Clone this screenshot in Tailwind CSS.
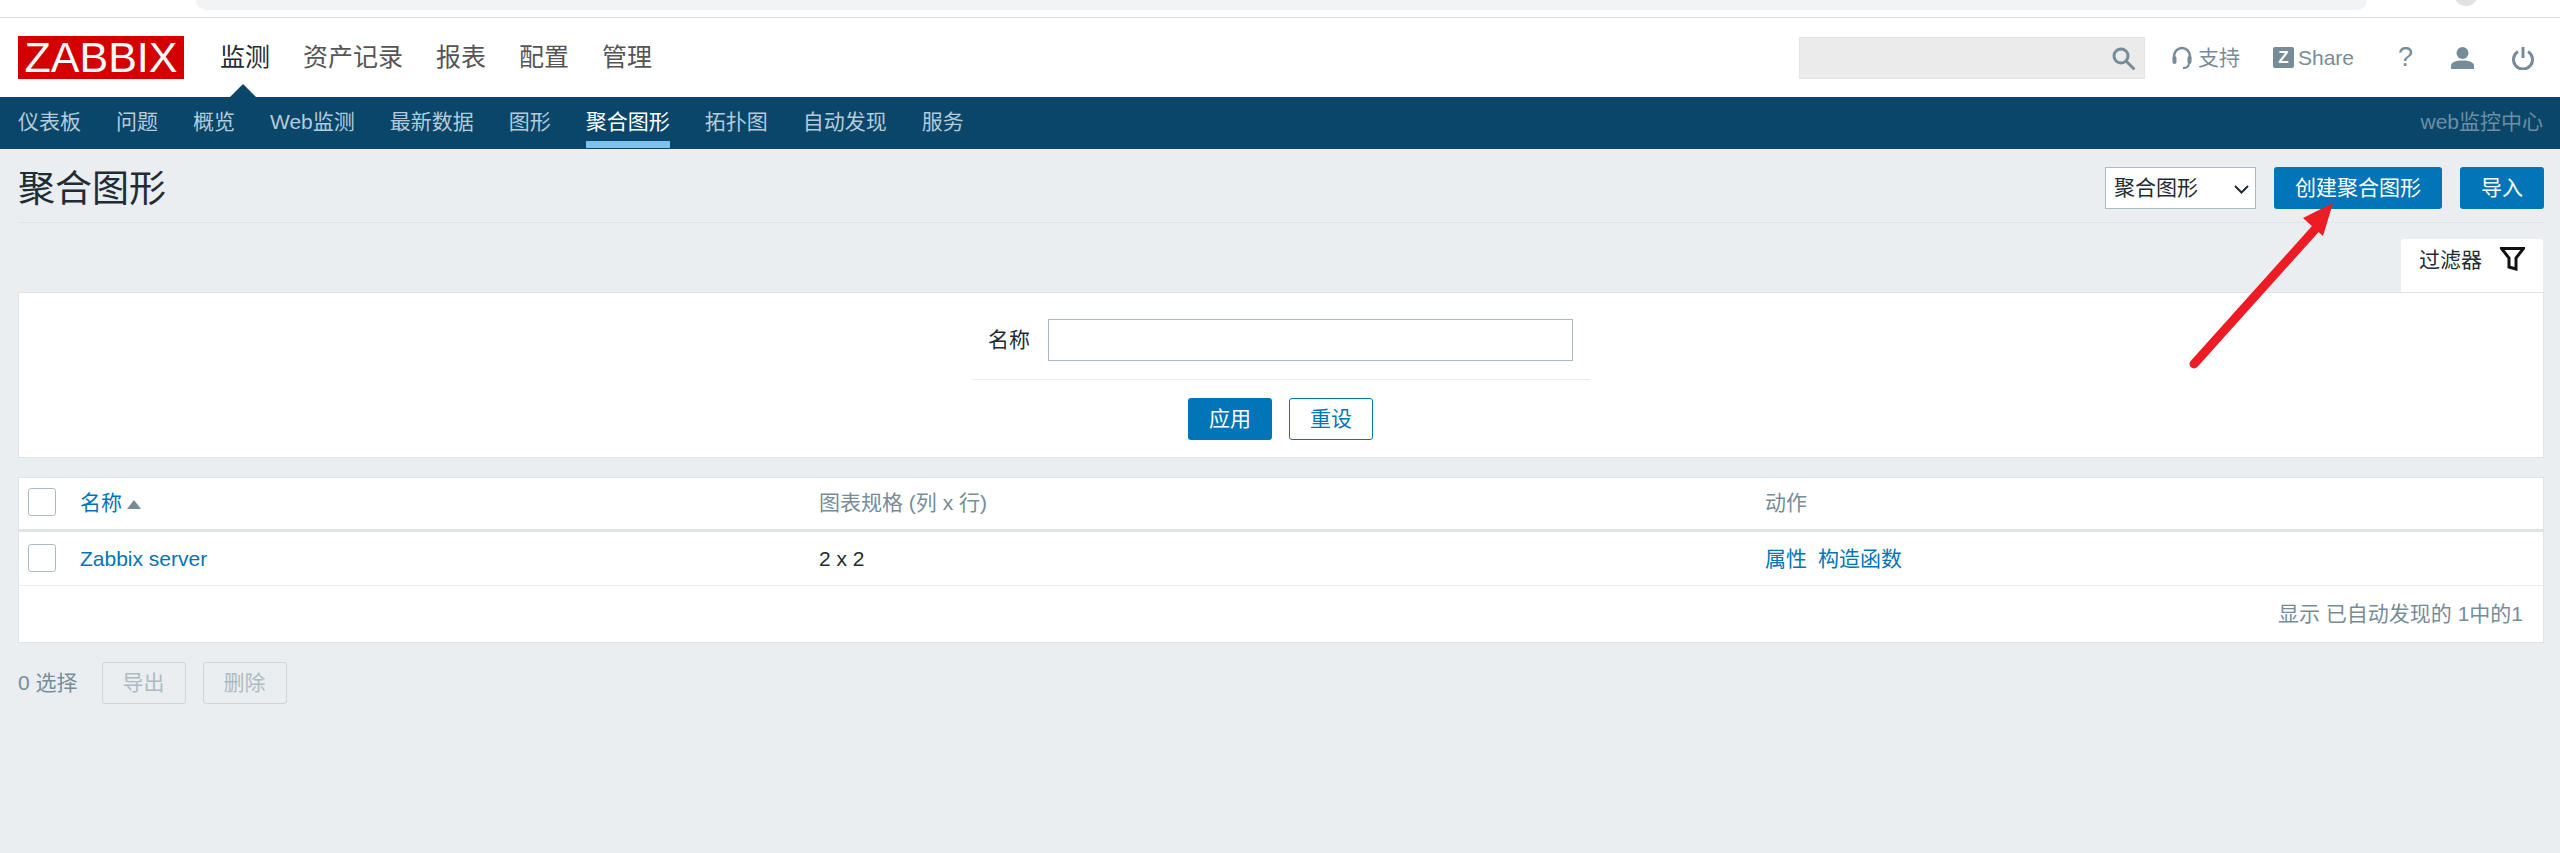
<!DOCTYPE html>
<html lang="en">
<head>
    <meta charset="UTF-8">
    <title>聚合图形</title>
    <script src="https://cdn.jsdelivr.net/npm/@tailwindcss/browser@4"></script>
</head>
<body class="relative h-[853px] overflow-hidden bg-[#ebeef0] text-[21px] text-[#1f2c33] font-['Liberation_Sans','Noto_Sans_CJK_SC',sans-serif]">

<!-- browser strip -->
<div class="h-[18px] bg-white border-b-[1px] border-[#dfdfdf] flex items-start">
    <div class="ml-[196px] w-[2171px] h-[10px] bg-[#f1f3f4] rounded-b-[18px]"></div>
    <div class="ml-[87px] -mt-[18px] w-[24px] h-[24px] rounded-full bg-[#dfe1e5]"></div>
</div>

<!-- top header -->
<header class="relative h-[79px] bg-white flex items-start pt-[18px] px-[18px]">
    <div class="w-[166px] h-[43px] bg-[#d40000] text-white text-[43px] leading-[43px] text-center">ZABBIX</div>
    <nav class="ml-[36px] h-[43px] flex items-center gap-[33px] text-[25px] text-[#555555]">
        <a class="text-[#1f2c33]">监测</a>
        <a>资产记录</a>
        <a>报表</a>
        <a>配置</a>
        <a>管理</a>
    </nav>
    <div class="absolute left-[230px] bottom-0 w-0 h-0 border-x-[13px] border-x-transparent border-b-[13px] border-b-[#0a466a]"></div>

    <div class="ml-auto mr-[8px] h-[43px] flex items-center text-[#768d99]">
        <div class="w-[346px] h-[42px] bg-[#ebebeb] border border-[#e4e4e4] flex items-center justify-end pr-[9px]">
            <svg class="w-[24px] h-[24px]" viewBox="0 0 24 24" fill="none" stroke="#768d99" stroke-width="3"><circle cx="10" cy="10" r="7"/><path d="M15 15l7.500 7.500" stroke-linecap="round"/></svg>
        </div>
        <svg class="ml-[26px] w-[22px] h-[24px]" viewBox="0 0 22 24" fill="none" stroke="#768d99" stroke-width="2.500"><path d="M3 14V10a8 8 0 0 1 16 0v4"/><rect x="1.500" y="10" width="4" height="8" rx="2" fill="#768d99" stroke="none"/><rect x="16.500" y="10" width="4" height="8" rx="2" fill="#768d99" stroke="none"/><path d="M18 17c0 3-2 5-6 5" stroke-width="2"/></svg>
        <span class="ml-[5px]">支持</span>
        <div class="ml-[33px] w-[21px] h-[21px] rounded-[2px] bg-[#768d99] text-white text-[17px] leading-[21px] text-center font-bold">Z</div>
        <span class="ml-[4px]">Share</span>
        <span class="ml-[44px] w-[12px] text-[27px] text-center">?</span>
        <svg class="ml-[41px] w-[23px] h-[22px]" viewBox="0 0 23 22" fill="#768d99"><circle cx="11.500" cy="6" r="6"/><path d="M0 22v-3c0-4 5-5.500 11.500-5.500S23 15 23 19v3z"/></svg>
        <svg class="ml-[38px] w-[22px] h-[24px]" viewBox="0 0 22 24" fill="none" stroke="#768d99" stroke-width="3"><path d="M11 1v11"/><path d="M6 5.500a9.500 9.500 0 1 0 10 0"/></svg>
    </div>
</header>

<!-- sub navigation -->
<nav class="h-[52px] bg-[#0a466a] flex items-start gap-[35px] px-[18px] text-[#b4cbd9]">
    <a class="h-[51px] pt-[6px] flex items-center border-b-[7px] border-transparent">仪表板</a>
    <a class="h-[51px] pt-[6px] flex items-center border-b-[7px] border-transparent">问题</a>
    <a class="h-[51px] pt-[6px] flex items-center border-b-[7px] border-transparent">概览</a>
    <a class="h-[51px] pt-[6px] flex items-center border-b-[7px] border-transparent">Web监测</a>
    <a class="h-[51px] pt-[6px] flex items-center border-b-[7px] border-transparent">最新数据</a>
    <a class="h-[51px] pt-[6px] flex items-center border-b-[7px] border-transparent">图形</a>
    <a class="h-[51px] pt-[6px] flex items-center border-b-[7px] border-[#7dc1ee] text-white">聚合图形</a>
    <a class="h-[51px] pt-[6px] flex items-center border-b-[7px] border-transparent">拓扑图</a>
    <a class="h-[51px] pt-[6px] flex items-center border-b-[7px] border-transparent">自动发现</a>
    <a class="h-[51px] pt-[6px] flex items-center border-b-[7px] border-transparent">服务</a>
    <span class="ml-auto -mr-[1px] h-[51px] pt-[6px] pb-[7px] flex items-center text-[#6f8ea1]">web监控中心</span>
</nav>

<main class="ml-[18px] mr-[16px]">
    <!-- title row -->
    <div class="h-[74px] pt-[18px] border-b border-[#e0e4e7] flex items-start">
        <h1 class="mt-[2px] text-[37px] leading-[42px] font-normal">聚合图形</h1>
        <div class="relative ml-auto w-[151px] h-[42px] bg-white border border-[#acbbc2] flex items-center pl-[8px]">
            聚合图形
            <svg class="absolute right-[6px] top-[17px] w-[15px] h-[9px]" viewBox="0 0 15 9" fill="none" stroke="#1f2c33" stroke-width="2"><path d="M1 1l6.500 6.500L14 1"/></svg>
        </div>
        <button class="ml-[18px] w-[168px] h-[42px] bg-[#0275b8] text-white rounded-[3px]">创建聚合图形</button>
        <button class="ml-[18px] w-[84px] h-[42px] bg-[#0275b8] text-white rounded-[3px]">导入</button>
    </div>

    <!-- filter -->
    <div class="mt-[16px] flex justify-end mr-[1px]">
        <div class="w-[142px] h-[53px] bg-white rounded-t-[3px] flex items-start pt-[8px] pl-[18px]">
            <span class="-mt-[3px]">过滤器</span>
            <svg class="ml-[18px] w-[25px] h-[24px]" viewBox="0 0 25 24" fill="none" stroke="#111111" stroke-width="3"><path d="M1.500 1.500h22L16 11v11l-7-2v-9z"/></svg>
        </div>
    </div>
    <section class="h-[166px] bg-white border border-[#e0e4e7]">
        <div class="w-[619px] ml-[952px] pt-[26px]">
            <div class="flex items-center justify-end gap-[18px] pr-[17px]">
                <label>名称</label>
                <input class="w-[525px] h-[42px] border border-[#acbbc2] bg-white" type="text">
            </div>
            <div class="mt-[18px] border-t border-[#ebeef0]"></div>
            <div class="mt-[18px] flex justify-center gap-[17px]">
                <button class="w-[84px] h-[42px] bg-[#0275b8] text-white rounded-[3px]">应用</button>
                <button class="w-[84px] h-[42px] bg-white border border-[#0275b8] text-[#0275b8] rounded-[3px]">重设</button>
            </div>
        </div>
    </section>

    <!-- list -->
    <section class="mt-[19px] h-[166px] bg-white border border-[#e0e4e7]">
        <div class="h-[54px] pb-[1px] border-b-[3px] border-[#dfe4e7] grid grid-cols-[61px_739px_946px_1fr] items-center text-[#768d99]">
            <div class="pl-[9px] mb-[2px]"><input class="block appearance-none w-[28px] h-[28px] border border-[#acbbc2] rounded-[3px]" type="checkbox"></div>
            <div class="flex items-center text-[#0275b8]">名称<span class="ml-[5px] mt-[3px] w-0 h-0 border-x-[7px] border-x-transparent border-b-[9px] border-b-[#768d99]"></span></div>
            <div>图表规格 (列 x 行)</div>
            <div>动作</div>
        </div>
        <div class="h-[54px] border-b border-[#ebeef0] grid grid-cols-[61px_739px_946px_1fr] items-center">
            <div class="pl-[9px] mb-[2px]"><input class="block appearance-none w-[28px] h-[28px] border border-[#acbbc2] rounded-[3px]" type="checkbox"></div>
            <a class="text-[#0275b8]">Zabbix server</a>
            <div>2 x 2</div>
            <div class="flex gap-[11px] text-[#0275b8]"><a>属性</a><a>构造函数</a></div>
        </div>
        <div class="h-[56px] pb-[1px] pr-[20px] flex items-center justify-end text-[#768d99]">显示 已自动发现的 1中的1</div>
    </section>

    <!-- bulk actions -->
    <div class="mt-[19px] flex items-center text-[#768d99]">
        <span>0 选择</span>
        <button class="ml-[24px] w-[84px] h-[42px] border border-[#ccd5d9] text-[#acbbc2] rounded-[3px]">导出</button>
        <button class="ml-[17px] w-[84px] h-[42px] border border-[#ccd5d9] text-[#acbbc2] rounded-[3px]">删除</button>
    </div>
</main>

<!-- red annotation arrow -->
<svg class="absolute left-0 top-0 pointer-events-none" width="2560" height="853" viewBox="0 0 2560 853">
    <path d="M2194 364L2318 226" fill="none" stroke="#ed1c24" stroke-width="9" stroke-linecap="round"/>
    <path d="M2333 203L2303 218L2323 236z" fill="#ed1c24"/>
</svg>

</body>
</html>
